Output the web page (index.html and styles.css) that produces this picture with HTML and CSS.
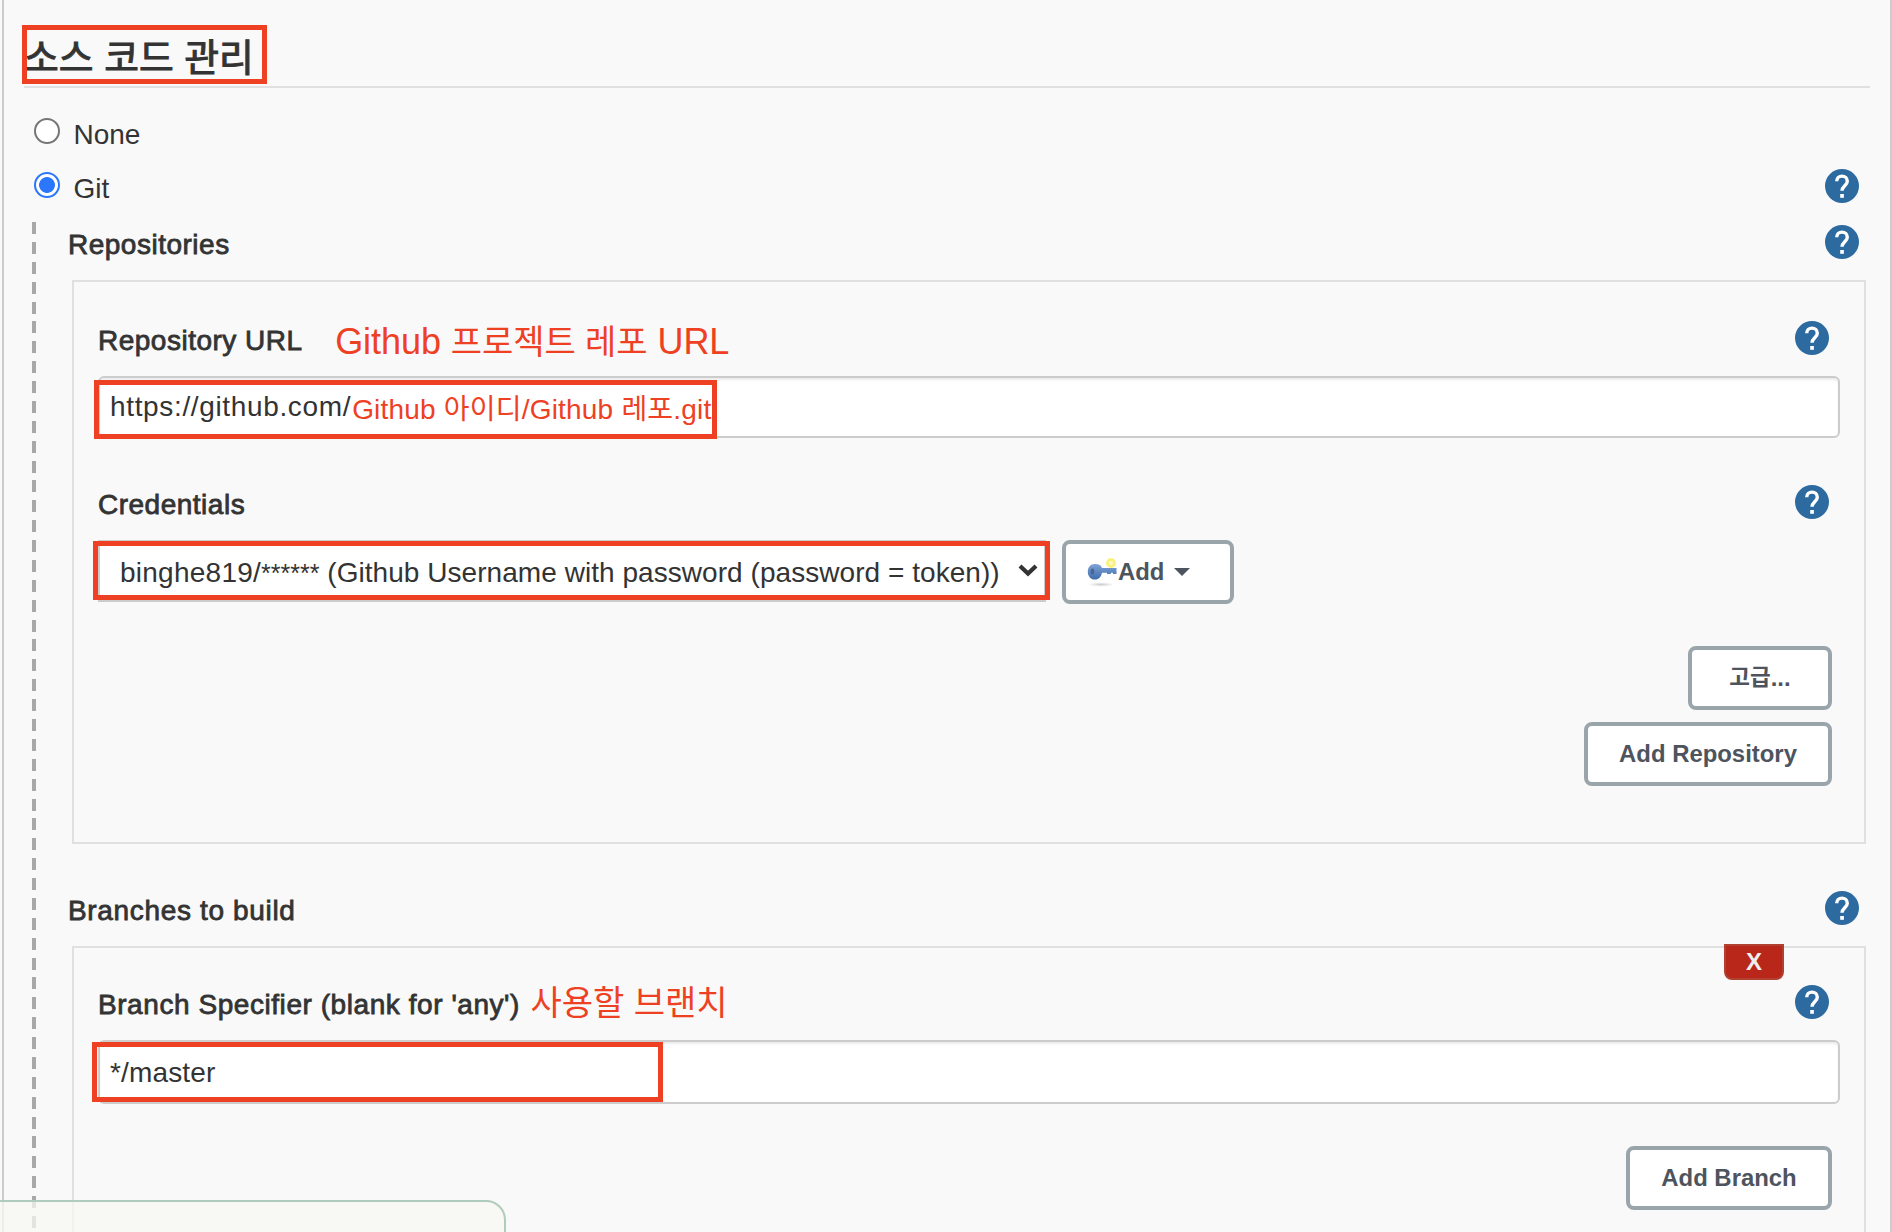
FILE: index.html
```html
<!DOCTYPE html>
<html lang="ko">
<head>
<meta charset="utf-8">
<title>소스 코드 관리</title>
<link rel="stylesheet" href="styles.css">
</head>
<body>
<svg class="defs" aria-hidden="true">
  <symbol id="help" viewBox="0 0 34 34">
    <circle cx="17" cy="17" r="17" fill="#2c6aa0"/>
    <path d="M11.700 12.200a5.300 5.100 0 0 1 10.600 0c0 4.200-5.300 4.900-5.300 9.600" fill="none" stroke="#fff" stroke-width="3.400"/>
    <rect x="15.200" y="25" width="3.700" height="3.800" fill="#fff"/>
  </symbol>
</svg>
<main class="page">
  <header class="section-head">
    <h1 class="title">소스 코드 관리</h1>
    <div class="mark mark-title"></div>
  </header>

  <div class="choice">
    <span class="radio"></span><span class="choice-label">None</span>
  </div>
  <div class="choice">
    <span class="radio radio-on"></span><span class="choice-label">Git</span>
    <svg class="help"><use href="#help"/></svg>
  </div>

  <section class="nested">
    <div class="row"><span class="label">Repositories</span><svg class="help"><use href="#help"/></svg></div>
    <div class="box box-repo">
      <div class="row">
        <span class="label">Repository URL</span>
        <span class="note note-url">Github <span class="ko">프로젝트 레포</span> URL</span>
        <svg class="help"><use href="#help"/></svg>
      </div>
      <div class="input">
        <span class="value value-url">https://github.com/</span><span class="note-inline">Github <span class="ko-sm">아이디</span>/Github <span class="ko-sm">레포</span>.git</span>
        <div class="mark mark-url"></div>
      </div>
      <div class="row row-gap"><span class="label">Credentials</span><svg class="help"><use href="#help"/></svg></div>
      <div class="cred">
        <div class="select">
          <span class="select-text"><span class="user">binghe819/</span><span class="masked">******</span> (Github Username with password (password = token))</span>
          <svg class="chevron" viewBox="0 0 20 14"><path d="M2 3l8 7.500L18 3" fill="none" stroke="#333" stroke-width="4.200"/></svg>
          <div class="mark mark-select"></div>
        </div>
        <div class="btn btn-add">
          <svg class="key" viewBox="0 0 32 32">
            <defs>
              <radialGradient id="shade"><stop offset="0" stop-color="#ccc"/><stop offset="1" stop-color="#fff"/></radialGradient>
              <linearGradient id="steel" x2="0" y2="1"><stop offset="0" stop-color="#7fa3d6"/><stop offset="1" stop-color="#3f6cad"/></linearGradient>
            </defs>
            <ellipse cx="15" cy="28.500" rx="13" ry="2.200" fill="url(#shade)"/>
            <circle cx="25" cy="7" r="5" fill="#fbf27c"/>
            <circle cx="25" cy="7" r="2" fill="#fffbd0"/>
            <path d="M9 8c4 0 6 1.500 7 4h14.500v6H27v-1.200h-2.200V18H21v-1.300h-5C15 21 13 23.500 9 23.500 4.500 23.500 1.800 20 1.800 15.700S4.500 8 9 8z" fill="url(#steel)"/>
            <ellipse cx="6.500" cy="15.500" rx="1.800" ry="3" fill="#4b6590"/>
          </svg>
          <span>Add</span><span class="caret"></span>
        </div>
      </div>
      <div class="actions">
        <div class="btn btn-adv"><span class="ko-btn">고급</span>...</div>
        <div class="btn btn-repo">Add Repository</div>
      </div>
    </div>

    <div class="row row-gap"><span class="label label-branches">Branches to build</span><svg class="help"><use href="#help"/></svg></div>
    <div class="box box-branch">
      <div class="delete">X</div>
      <div class="row">
        <span class="label label-spec">Branch Specifier (blank for 'any')</span>
        <span class="note note-branch"><span class="ko">사용할 브랜치</span></span>
        <svg class="help"><use href="#help"/></svg>
      </div>
      <div class="input input-branch">
        <span class="value">*/master</span>
        <div class="mark mark-branch"></div>
      </div>
      <div class="actions">
        <div class="btn btn-branch">Add Branch</div>
      </div>
    </div>
  </section>
</main>
<div class="floating"></div>
</body>
</html>
```
FILE: styles.css
```css
* { box-sizing: border-box; }
body {
  position: relative;
  height: 1232px;
  margin: 0;
  overflow: hidden;
  background: #f9f9f9;
  color: #333;
  font: 28px/32px "Liberation Sans", "Noto Sans CJK KR", sans-serif;
}
.defs { position: absolute; width: 0; height: 0; }
.page {
  height: 1232px;
  margin-left: 2px;
  padding: 0 20px;
  overflow: hidden;
  border-left: 2px solid #ccc;
  border-right: 2px solid #ccc;
  white-space: nowrap;
}
.section-head {
  position: relative;
  height: 88px;
  margin-bottom: 16px;
  padding-top: 33px;
  border-bottom: 2px solid #e0e0e0;
}
.title {
  margin: 0;
  font: normal 37.8px/44px "Noto Sans CJK KR", sans-serif;
  -webkit-text-stroke: 1px #333;
}

/* red highlight frames lying over the form */
.mark { position: absolute; border: 5px solid #ee4023; }
.mark-title { left: -2px; top: 25px; width: 245px; height: 59px; }
.mark-url { left: -6px; top: 2px; width: 623px; height: 59px; }
.mark-select { left: -7px; top: -1px; width: 957px; height: 59px; }
.mark-branch { left: -8px; top: 0; width: 571px; height: 60px; }

.choice { display: flex; align-items: center; height: 54px; padding: 0 11px 0 10px; }
.radio {
  width: 26px;
  height: 26px;
  border: 2px solid #767676;
  border-radius: 50%;
  background: #fff;
}
.radio-on {
  border-color: #2b77fb;
  background: radial-gradient(circle, #2b77fb 7.500px, #fff 8.300px);
}
.choice-label { margin-left: 13.5px; padding-top: 7px; }
.choice .help { margin-top: 2px; }
.help { flex: none; width: 34px; height: 34px; margin-left: auto; }

.nested {
  height: 1010px;
  margin: 10px 4px 0 8px;
  padding-left: 36px;
  background: repeating-linear-gradient(#a8a8a8 0 12px, transparent 12px 19.880px) 0 0 / 4px 100% no-repeat;
}
.row { display: flex; align-items: center; height: 40px; margin-bottom: 18px; padding-right: 7px; }
.row-gap { margin-top: 44px; }
.label { padding-top: 6px; letter-spacing: 0.5px; -webkit-text-stroke: 0.8px #333; }
.label-branches { letter-spacing: 0.66px; }
.label-spec { letter-spacing: 0.56px; }
.box {
  position: relative;
  margin-left: 4px;
  border: 2px solid #e0e0e0;
}
.box-repo { height: 564px; padding: 36px 24px 0; }
.box-branch { height: 300px; padding: 34px 24px 0; }
.box .row { padding-right: 11px; }

.note { color: #ee4023; font-size: 36px; line-height: 40px; }
.note-url { margin-left: 32.5px; padding-top: 7px; letter-spacing: -0.06px; }
.note-branch { margin-left: 10.5px; padding-top: 2px; }
.ko { font-size: 34px; }
.ko-sm { font-size: 28px; }

.input {
  position: relative;
  display: flex;
  height: 62px;
  padding: 13px 10px;
  border: 2px solid #ccc;
  border-radius: 6px;
  background: #fff;
  box-shadow: inset 0 2px 2px rgba(0, 0, 0, 0.075);
}
.input-branch { height: 64px; padding-top: 15px; }
.value { letter-spacing: 0.15px; }
.value-url { letter-spacing: 0.65px; }
.note-inline { margin-left: 1px; padding-top: 3px; color: #ee4023; letter-spacing: 0.2px; }

.cred { display: flex; gap: 16px; }
.select {
  position: relative;
  display: flex;
  width: 948px;
  height: 62px;
  padding: 15px 6px 0 20px;
  border: 2px solid #ccc;
  background: #fff;
}
.select-text { letter-spacing: 0.05px; }
.user { letter-spacing: 0.25px; }
.masked { font-size: 25px; letter-spacing: 0; }
.chevron { width: 20px; height: 14px; margin: 6px 0 0 auto; }

.btn {
  display: flex;
  align-items: center;
  justify-content: center;
  height: 64px;
  border: 4px solid #9aa5ab;
  border-radius: 8px;
  background: #fff;
  color: #4d545d;
  font-size: 23.9px;
  font-weight: bold;
}
.btn-add { width: 172px; justify-content: flex-start; padding-left: 20px; }
.key { width: 32px; height: 32px; }
.caret {
  margin: 0 0 0 10px;
  border: 8px solid transparent;
  border-top-color: #4d545d;
  border-bottom: 0;
}
.actions {
  display: flex;
  flex-direction: column;
  align-items: flex-end;
  gap: 12px;
  margin: 42px 8px 0 0;
}
.btn-adv { width: 144px; }
.ko-btn { font-size: 22.5px; }
.btn-repo { width: 248px; }
.btn-branch { width: 206px; }

.delete {
  position: absolute;
  top: -4px;
  right: 80px;
  width: 60px;
  height: 36px;
  border: 2px solid #b04030;
  border-radius: 0 0 8px 8px;
  background: #b9271b;
  color: #eee;
  font-size: 24px;
  font-weight: bold;
  text-align: center;
}
.floating {
  position: absolute;
  left: -30px;
  top: 1200px;
  width: 536px;
  height: 60px;
  border: 2px solid #b0ccbc;
  border-radius: 20px;
  background: rgba(247, 248, 242, 0.75);
}
```
